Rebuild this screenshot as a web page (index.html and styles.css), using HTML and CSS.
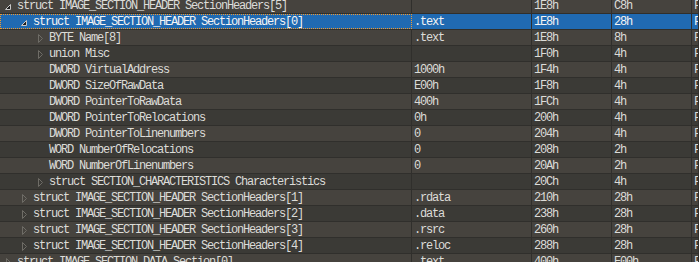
FILE: index.html
```html
<!DOCTYPE html>
<html lang="en">
<head>
  <meta charset="UTF-8">
  <title>Template Results</title>
  <link rel="stylesheet" href="styles.css">
</head>
<body>
  <div class="tree">
    <div class="row even">
      <div class="cell name lvl0"><span class="tog"><svg class="open" width="8" height="8"><path d="M6.5 1.5L6.5 6.5L1.5 6.5Z"/></svg></span>struct IMAGE_SECTION_HEADER SectionHeaders[5]</div>
      <div class="cell"></div><div class="cell">1E8h</div><div class="cell">C8h</div><div class="cell">F</div>
    </div>
    <div class="row sel">
      <div class="cell name lvl1 focus"><span class="tog"><svg class="open" width="8" height="8"><path d="M6.5 1.5L6.5 6.5L1.5 6.5Z"/></svg></span>struct IMAGE_SECTION_HEADER SectionHeaders[0]</div>
      <div class="cell">.text</div><div class="cell">1E8h</div><div class="cell">28h</div><div class="cell">F</div>
    </div>
    <div class="row even">
      <div class="cell name lvl2"><span class="tog"><svg class="shut" width="8" height="9"><path d="M1.5 0.5L5.5 4.5L1.5 8.5Z"/></svg></span>BYTE Name[8]</div>
      <div class="cell">.text</div><div class="cell">1E8h</div><div class="cell">8h</div><div class="cell">F</div>
    </div>
    <div class="row">
      <div class="cell name lvl2"><span class="tog"><svg class="shut" width="8" height="9"><path d="M1.5 0.5L5.5 4.5L1.5 8.5Z"/></svg></span>union Misc</div>
      <div class="cell"></div><div class="cell">1F0h</div><div class="cell">4h</div><div class="cell">F</div>
    </div>
    <div class="row even">
      <div class="cell name lvl2"><span class="tog"></span>DWORD VirtualAddress</div>
      <div class="cell">1000h</div><div class="cell">1F4h</div><div class="cell">4h</div><div class="cell">F</div>
    </div>
    <div class="row">
      <div class="cell name lvl2"><span class="tog"></span>DWORD SizeOfRawData</div>
      <div class="cell">E00h</div><div class="cell">1F8h</div><div class="cell">4h</div><div class="cell">F</div>
    </div>
    <div class="row even">
      <div class="cell name lvl2"><span class="tog"></span>DWORD PointerToRawData</div>
      <div class="cell">400h</div><div class="cell">1FCh</div><div class="cell">4h</div><div class="cell">F</div>
    </div>
    <div class="row">
      <div class="cell name lvl2"><span class="tog"></span>DWORD PointerToRelocations</div>
      <div class="cell">0h</div><div class="cell">200h</div><div class="cell">4h</div><div class="cell">F</div>
    </div>
    <div class="row even">
      <div class="cell name lvl2"><span class="tog"></span>DWORD PointerToLinenumbers</div>
      <div class="cell">0</div><div class="cell">204h</div><div class="cell">4h</div><div class="cell">F</div>
    </div>
    <div class="row">
      <div class="cell name lvl2"><span class="tog"></span>WORD NumberOfRelocations</div>
      <div class="cell">0</div><div class="cell">208h</div><div class="cell">2h</div><div class="cell">F</div>
    </div>
    <div class="row even">
      <div class="cell name lvl2"><span class="tog"></span>WORD NumberOfLinenumbers</div>
      <div class="cell">0</div><div class="cell">20Ah</div><div class="cell">2h</div><div class="cell">F</div>
    </div>
    <div class="row">
      <div class="cell name lvl2"><span class="tog"><svg class="shut" width="8" height="9"><path d="M1.5 0.5L5.5 4.5L1.5 8.5Z"/></svg></span>struct SECTION_CHARACTERISTICS Characteristics</div>
      <div class="cell"></div><div class="cell">20Ch</div><div class="cell">4h</div><div class="cell">F</div>
    </div>
    <div class="row even">
      <div class="cell name lvl1"><span class="tog"><svg class="shut" width="8" height="9"><path d="M1.5 0.5L5.5 4.5L1.5 8.5Z"/></svg></span>struct IMAGE_SECTION_HEADER SectionHeaders[1]</div>
      <div class="cell">.rdata</div><div class="cell">210h</div><div class="cell">28h</div><div class="cell">F</div>
    </div>
    <div class="row">
      <div class="cell name lvl1"><span class="tog"><svg class="shut" width="8" height="9"><path d="M1.5 0.5L5.5 4.5L1.5 8.5Z"/></svg></span>struct IMAGE_SECTION_HEADER SectionHeaders[2]</div>
      <div class="cell">.data</div><div class="cell">238h</div><div class="cell">28h</div><div class="cell">F</div>
    </div>
    <div class="row even">
      <div class="cell name lvl1"><span class="tog"><svg class="shut" width="8" height="9"><path d="M1.5 0.5L5.5 4.5L1.5 8.5Z"/></svg></span>struct IMAGE_SECTION_HEADER SectionHeaders[3]</div>
      <div class="cell">.rsrc</div><div class="cell">260h</div><div class="cell">28h</div><div class="cell">F</div>
    </div>
    <div class="row">
      <div class="cell name lvl1"><span class="tog"><svg class="shut" width="8" height="9"><path d="M1.5 0.5L5.5 4.5L1.5 8.5Z"/></svg></span>struct IMAGE_SECTION_HEADER SectionHeaders[4]</div>
      <div class="cell">.reloc</div><div class="cell">288h</div><div class="cell">28h</div><div class="cell">F</div>
    </div>
    <div class="row even">
      <div class="cell name lvl0"><span class="tog"><svg class="shut" width="8" height="9"><path d="M1.5 0.5L5.5 4.5L1.5 8.5Z"/></svg></span>struct IMAGE_SECTION_DATA Section[0]</div>
      <div class="cell">.text</div><div class="cell">400h</div><div class="cell">E00h</div><div class="cell">F</div>
    </div>
  </div>
</body>
</html>
```
FILE: styles.css
```css
body {
  margin: 0;
  background-color: #3b3a36;
  overflow: hidden;
  font-family: 'Liberation Mono', 'DejaVu Sans Mono', monospace;
  font-size: 12px;
  letter-spacing: -1.2px;
  color: #dcdcd8;
}
.tree {
  margin-top: -2px;
}
.row {
  display: grid;
  grid-template-columns: 412px 120px 80px 80px 1fr;
  height: 16px;
  box-sizing: border-box;
  border-bottom: 1px solid #302f2c;
  background-color: #3b3a36;
}
.row.even {
  background-color: #46433e;
}
.row.sel {
  background-color: #206ab2;
  color: #f4f4f4;
}
.cell {
  display: flex;
  align-items: flex-start;
  padding: 2px 0 0 2px;
  border-right: 1px solid #302f2c;
  white-space: nowrap;
  overflow: hidden;
  line-height: 13px;
}
.cell.name {
  padding-left: 0;
}
.lvl1 {
  padding-left: 16px !important;
}
.lvl2 {
  padding-left: 32px !important;
}
.focus {
  outline: 1px dotted #f29b2e;
  outline-offset: -1px;
  border-right-color: #206ab2;
}
.tog {
  display: inline-flex;
  align-items: center;
  width: 17px;
  height: 13px;
  flex-shrink: 0;
}
.tog .open {
  margin-left: 4px;
}
.tog .open path {
  fill: #1e1e1e;
  stroke: #c8c8c8;
}
.tog .shut {
  margin-left: 5px;
}
.tog .shut path {
  fill: none;
  stroke: #6e6c66;
}
```
